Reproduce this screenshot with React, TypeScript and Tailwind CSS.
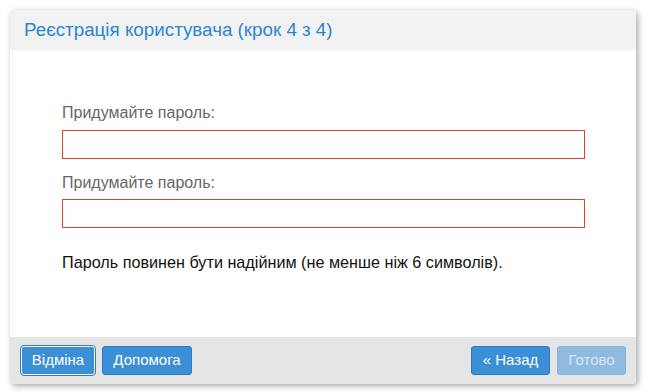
export default function App() {
    const font = { fontFamily: '"Liberation Sans", Arial, sans-serif' };

    return (
        <div className="w-[651px] h-[392px] bg-white pt-[10px] pl-[10px]" style={font}>
            <div className="w-[626px] h-[374px] flex flex-col rounded-[4px] overflow-hidden bg-white shadow-[2px_2px_6px_rgba(0,0,0,0.35)]">
                {/* header */}
                <div className="h-[40px] shrink-0 bg-[#f2f2f2] flex items-center px-[14px]">
                    <h1 className="text-[18.8px] text-[#2b86d2]">Реєстрація користувача (крок 4 з 4)</h1>
                </div>

                {/* body */}
                <div className="flex-1 pl-[52px] pr-[52px] pt-[54px]">
                    <label className="block text-[16px] leading-[18px] text-[#666]">Придумайте пароль:</label>
                    <input type="password" className="block mt-[8px] w-[523px] h-[29px] border border-[#d5462c] outline-none" />
                    <label className="block mt-[15px] text-[16px] leading-[18px] text-[#666]">Придумайте пароль:</label>
                    <input type="password" className="block mt-[7px] w-[523px] h-[29px] border border-[#d5462c] outline-none" />
                    <p className="mt-[25px] text-[16.2px] leading-[18px] text-[#111]">
                        Пароль повинен бути надійним (не менше ніж 6 символів).
                    </p>
                </div>

                {/* footer */}
                <div className="h-[47px] shrink-0 bg-[#e5e5e5] flex items-center justify-between pl-[11px] pr-[10px]">
                    <div className="flex gap-[7px]">
                        <button className="w-[74px] h-[29px] rounded-[3px] bg-[#3a8fd6] text-white text-[15px] border border-white outline outline-1 outline-[#2a7cc2]">
                            Відміна
                        </button>
                        <button className="w-[90px] h-[29px] rounded-[3px] bg-[#3a8fd6] text-white text-[15px] border border-[#2a7cc2]">
                            Допомога
                        </button>
                    </div>
                    <div className="flex gap-[7px]">
                        <button className="w-[79px] h-[29px] rounded-[3px] bg-[#3a8fd6] text-white text-[15px] border border-[#2a7cc2]">
                            « Назад
                        </button>
                        <button className="w-[69px] h-[29px] rounded-[3px] bg-[#8fbbe0] text-[#d6e6f4] text-[15px] border border-[#86b3da]">
                            Готово
                        </button>
                    </div>
                </div>
            </div>
        </div>
    );
}
